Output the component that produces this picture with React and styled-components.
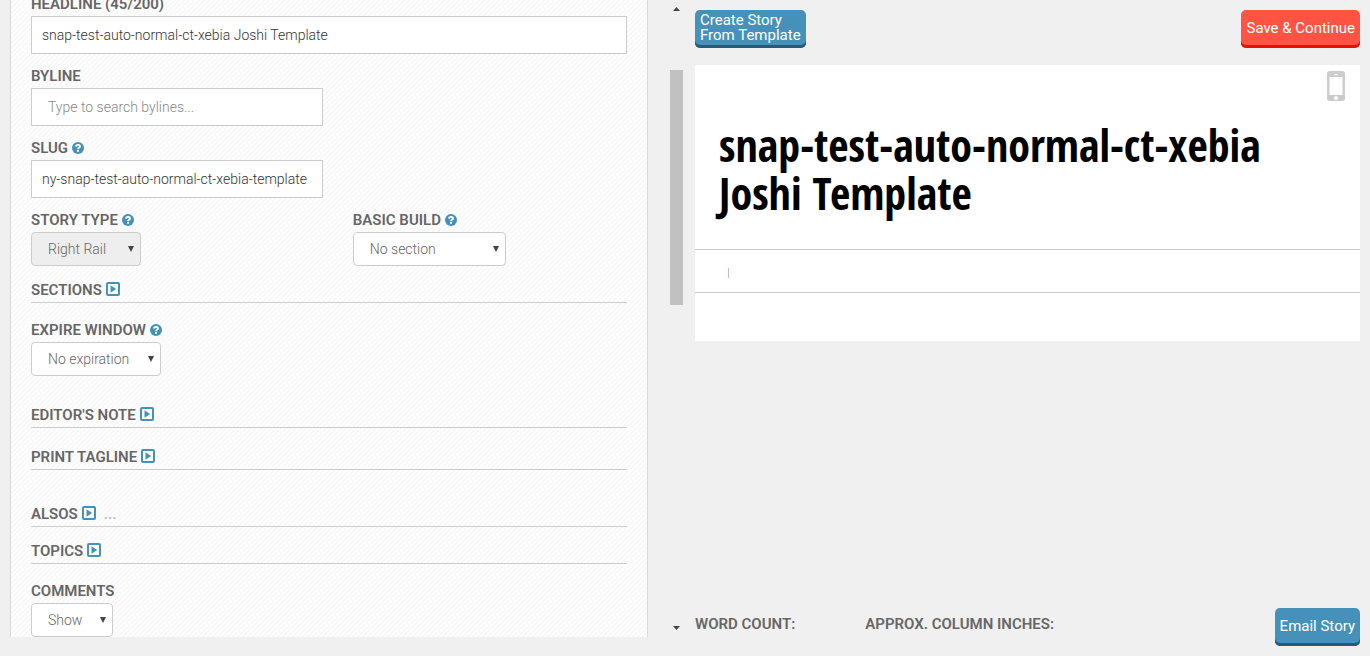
import React from "react";
import styled, { createGlobalStyle } from "styled-components";

const Global = createGlobalStyle`
  * { box-sizing: border-box; }
  body { margin: 0; background: #f0f0f0; color: #666; font: 300 14px/20px Roboto, "Liberation Sans", sans-serif; }
  button, input, select { font: inherit; margin: 0; }
`;

const Page = styled.div`
  display: grid;
  grid-template-columns: minmax(0, 638fr) 47px minmax(0, 665fr);
  min-height: 100vh;
  padding: 0 10px;
`;

const Panel = styled.main`
  align-self: start;
  overflow: hidden;
  padding: 0 20px;
  border: solid #d9d9d9;
  border-width: 0 1px;
  background: linear-gradient(135deg, #fff 25%, #f7f7f7 25% 50%, #fff 50% 75%, #f7f7f7 75%) 0 0 / 5px 5px;
`;

const Form = styled.form`
  display: flex;
  flex-direction: column;
  margin-top: -6px;
`;

const Field = styled.div`
  display: flex;
  flex-direction: column;
  align-items: flex-start;
  gap: 2px;
  width: ${(p) => p.$width || "auto"};
  margin-top: ${(p) => p.$gap || 0}px;
`;

const Label = styled.label`
  display: flex;
  align-items: center;
  gap: 4px;
  height: 20px;
  font-size: 15px;
  font-weight: 600;
  white-space: nowrap;
`;

const TextInput = styled.input`
  width: 100%;
  height: 38px;
  padding: 0 ${(p) => (p.$inset ? 16 : 10)}px;
  border: 1px solid #ccc;
  border-radius: 0;
  background: #fff;
  color: #333;
  &::placeholder { color: #888; opacity: 1; }
`;

const FieldRow = styled.div`
  display: grid;
  grid-template-columns: 54fr 46fr;
  margin-top: 12px;
`;

const SelectWrap = styled.div`
  position: relative;
  width: ${(p) => p.$width}px;
  svg { position: absolute; right: 7px; top: 14px; pointer-events: none; }
`;

const SelectBox = styled.select`
  appearance: none;
  display: block;
  width: 100%;
  height: 34px;
  padding: 0 16px;
  border: 1px solid #ccc;
  border-radius: 4px;
  background: #fff;
  color: #666;
  &:disabled { background: #eee; opacity: 1; }
`;

const Section = styled.section`
  display: flex;
  align-items: center;
  gap: 4px;
  height: 23px;
  padding-bottom: 2px;
  border-bottom: 1px solid #ccc;
  margin-top: ${(p) => p.$gap}px;
`;

const SectionTitle = styled.h2`
  margin: 0;
  font-size: 15px;
  line-height: 20px;
  font-weight: 600;
`;

const IconButton = styled.button`
  display: flex;
  padding: 0;
  border: 0;
  background: none;
`;

const ExpandButton = styled(IconButton)`
  padding-bottom: 2px;
`;

const Muted = styled.span`
  margin-left: 4px;
  color: #bbb;
  font-size: 15px;
  font-weight: 600;
`;

const ScrollRail = styled.div`
  display: flex;
  flex-direction: column;
  align-items: center;
  justify-self: end;
  width: 13px;
  margin-right: 12px;
  padding: 7px 0 26px;
`;

const Thumb = styled.div`
  width: 13px;
  height: 235px;
  margin: 59px 0 auto;
  background: #c1c1c1;
`;

const Preview = styled.aside`
  display: flex;
  flex-direction: column;
  padding: 10px 0;
`;

const Bar = styled.div`
  display: flex;
  justify-content: space-between;
  align-items: flex-start;
`;

const ActionButton = styled.button`
  height: 38px;
  padding: 0 5px 2px;
  border: 0;
  border-radius: 5px;
  background: ${(p) => (p.$danger ? "#ff5443" : "#4691b9")};
  box-shadow: inset 0 -3px ${(p) => (p.$danger ? "#e01400" : "#285a75")};
  color: #fff;
  font-size: 15px;
  font-weight: 400;
  line-height: 15px;
  text-align: left;
  white-space: nowrap;
`;

const Card = styled.article`
  display: flex;
  flex-direction: column;
  margin-top: 17px;
  padding-bottom: 48px;
  background: #fff;
`;

const DeviceButton = styled(IconButton)`
  align-self: flex-end;
  margin: 6px 15px 0 0;
`;

const Headline = styled.h1`
  margin: 20px 24px 32px;
  color: #000;
  font: 700 44px/48px "Open Sans Condensed", "Liberation Sans Narrow", "Liberation Sans", sans-serif;
`;

const Body = styled.div`
  display: flex;
  align-items: center;
  height: 44px;
  padding: 4px 33px 0;
  border: solid #ccc;
  border-width: 1px 0;
`;

const Caret = styled.span`
  width: 1px;
  height: 10px;
  background: #d9b3b8;
`;

const Footer = styled(Bar)`
  margin-top: auto;
`;

const Stats = styled.div`
  display: flex;
  gap: 70px;
  padding-top: 6px;
  font-size: 15px;
  font-weight: 600;
`;

const Help = () => (
  <svg width="12" height="12" viewBox="0 0 12 12" aria-hidden="true">
    <circle cx="6" cy="6" r="6" fill="#4691b9" />
    <path d="M3.9 4.7Q4.1 2.9 6 2.9T8 4.5Q8 5.2 7 5.7Q6 6.2 6 7.2" fill="none" stroke="#fff" strokeWidth="1.8" />
    <rect x="5" y="8" width="2" height="1.7" fill="#fff" />
  </svg>
);

const Expand = () => (
  <svg width="14" height="14" viewBox="0 0 14 14" aria-hidden="true">
    <rect x="1" y="1" width="12" height="12" rx="1" fill="#fff" stroke="#4691b9" strokeWidth="2" />
    <path d="M4.5 3.2V10.8L10.2 7Z" fill="#4691b9" />
  </svg>
);

const Phone = () => (
  <svg width="18" height="30" viewBox="0 0 18 30" aria-hidden="true">
    <rect width="18" height="30" rx="2.5" fill="#ccc" />
    <rect x="2.5" y="6" width="13" height="18" fill="#fff" />
    <rect x="7" y="3" width="4" height="1" fill="#fff" />
    <circle cx="9" cy="27" r="2" fill="#fff" />
  </svg>
);

const Arrow = ({ up }) => (
  <svg width="7" height="4" viewBox="0 0 7 4" aria-hidden="true">
    <path d={up ? "M0 4L3.5 0L7 4Z" : "M0 0L3.5 4L7 0Z"} fill="#444" />
  </svg>
);

const SelectField = ({ id, label, help, value, width, gap, disabled }) => (
  <Field $gap={gap}>
    <Label htmlFor={id}>{label}{help && <Help />}</Label>
    <SelectWrap $width={width}>
      <SelectBox id={id} disabled={disabled}><option>{value}</option></SelectBox>
      <svg width="6" height="6" viewBox="0 0 6 6" aria-hidden="true"><path d="M0 0H6L3 6Z" fill="#444" /></svg>
    </SelectWrap>
  </Field>
);

const Collapsible = ({ title, gap, note }) => (
  <Section $gap={gap}>
    <SectionTitle>{title}</SectionTitle>
    <ExpandButton type="button" aria-label={"Expand " + title}><Expand /></ExpandButton>
    {note && <Muted>{note}</Muted>}
  </Section>
);

export default function App() {
  return (
    <>
      <Global />
      <Page>
        <Panel>
          <Form>
            <Field $width="100%">
              <Label htmlFor="headline">HEADLINE (45/200)</Label>
              <TextInput id="headline" defaultValue="snap-test-auto-normal-ct-xebia Joshi Template" />
            </Field>
            <Field $gap={12} $width="49%">
              <Label htmlFor="byline">BYLINE</Label>
              <TextInput id="byline" $inset placeholder="Type to search bylines..." />
            </Field>
            <Field $gap={12} $width="49%">
              <Label htmlFor="slug">SLUG<Help /></Label>
              <TextInput id="slug" defaultValue="ny-snap-test-auto-normal-ct-xebia-template" />
            </Field>
            <FieldRow>
              <SelectField id="type" label="STORY TYPE" help value="Right Rail" width={110} disabled />
              <SelectField id="build" label="BASIC BUILD" help value="No section" width={153} />
            </FieldRow>
            <Collapsible title="SECTIONS" gap={14} />
            <SelectField id="expire" label="EXPIRE WINDOW" help value="No expiration" width={130} gap={17} />
            <Collapsible title="EDITOR'S NOTE" gap={29} />
            <Collapsible title="PRINT TAGLINE" gap={19} />
            <Collapsible title="ALSOS" gap={34} note="..." />
            <Collapsible title="TOPICS" gap={14} />
            <SelectField id="comments" label="COMMENTS" value="Show" width={82} gap={17} />
          </Form>
        </Panel>
        <ScrollRail>
          <Arrow up />
          <Thumb />
          <Arrow />
        </ScrollRail>
        <Preview>
          <Bar>
            <ActionButton type="button">Create Story<br />From Template</ActionButton>
            <ActionButton type="button" $danger>Save &amp; Continue</ActionButton>
          </Bar>
          <Card>
            <DeviceButton type="button" aria-label="Mobile preview"><Phone /></DeviceButton>
            <Headline>snap-test-auto-normal-ct-xebia Joshi Template</Headline>
            <Body><Caret /></Body>
          </Card>
          <Footer>
            <Stats><span>WORD COUNT:</span><span>APPROX. COLUMN INCHES:</span></Stats>
            <ActionButton type="button">Email Story</ActionButton>
          </Footer>
        </Preview>
      </Page>
    </>
  );
}
